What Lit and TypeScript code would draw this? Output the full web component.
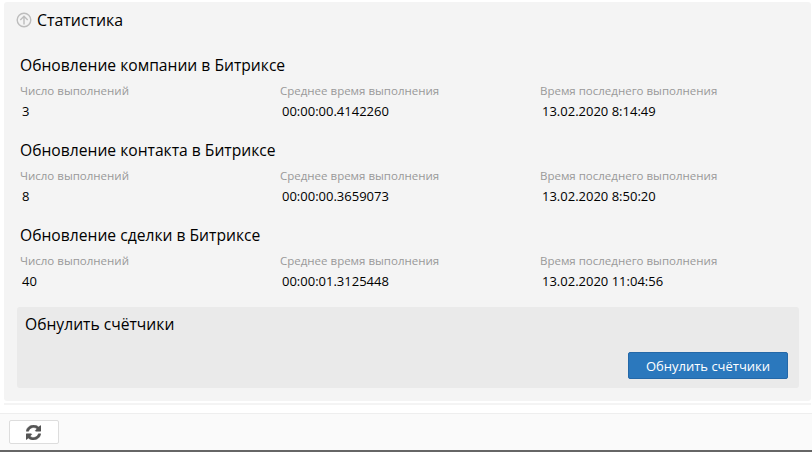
import { LitElement, html, css } from "lit";
import { customElement } from "lit/decorators.js";

const sections = [
  { title: "Обновление компании в Битриксе", n: "3", avg: "00:00:00.4142260", last: "13.02.2020 8:14:49" },
  { title: "Обновление контакта в Битриксе", n: "8", avg: "00:00:00.3659073", last: "13.02.2020 8:50:20" },
  { title: "Обновление сделки в Битриксе", n: "40", avg: "00:00:01.3125448", last: "13.02.2020 11:04:56" },
];

@customElement("app-root")
export class AppRoot extends LitElement {
  static styles = css`
    :host { display: block; width: 812px; height: 452px; background: #fff; font-family: "Open Sans", "Noto Sans", sans-serif; color: #000; overflow: hidden; }
    .page { display: flex; flex-direction: column; height: 452px; }
    .main { flex: none; height: 413px; padding: 2px 1px 0 4px; box-sizing: border-box; }
    .panel { background: #f4f4f4; height: 399px; border-radius: 3px; padding: 0 12px 0 13px; box-sizing: border-box; }
    .strip { height: 2px; margin-top: 2px; background: #f4f4f4; }
    .head { display: flex; align-items: center; gap: 5px; height: 36px; margin-left: -1px; }
    .head svg { display: block; }
    .head span { font-size: 15.9px; }
    .sec { padding: 0 0 0 3px; height: 85px; }
    .sec h3 { margin: 0; font-size: 15.65px; font-weight: 400; line-height: 20px; padding-top: 17px; padding-bottom: 8px; }
    .cols { display: grid; grid-template-columns: 260px 260px 1fr; }
    .lab { font-size: 11.5px; color: #999; line-height: 16px; }
    .val { font-size: 13px; padding: 4px 0 0 2px; line-height: 17px; }
    .reset { background: #eaeaea; border-radius: 3px; height: 81px; margin-top: 14px; padding: 0 11px 0 8px; box-sizing: border-box; display: flex; flex-direction: column; }
    .reset h4 { margin: 0; font-size: 15.65px; font-weight: 400; line-height: 20px; padding-top: 7px; }
    .btn { margin: 18px 0 0 auto; width: 160px; height: 27px; background: #2b78bd; border: 1px solid #2468a8; border-radius: 2px; color: #fff; font: 13px "Open Sans", "Noto Sans", sans-serif; padding: 0; box-sizing: border-box; }
    .foot { flex: none; height: 37px; background: #fafafa; border-top: 1px solid #eee; box-sizing: border-box; padding: 6px 0 0 9px; }
    .ref { width: 50px; height: 24px; background: #fff; border: 1px solid #ddd; border-radius: 2px; display: flex; align-items: center; justify-content: center; box-sizing: border-box; padding: 0 1px 0 0; }
    .bar { flex: none; height: 2px; background: #666; }
  `;
  render() {
    return html`<div class="page">
      <div class="main"><div class="panel">
        <div class="head">
          <svg width="16" height="16" viewBox="0 0 16 16" fill="none" stroke="#bdbdbd" stroke-width="1.4"><circle cx="8" cy="8" r="6.8"/><path d="M8 12.500V4.200M4.300 7.900 8 4.200l3.700 3.700"/></svg>
          <span>Статистика</span>
        </div>
        ${sections.map(s => html`<div class="sec">
          <h3>${s.title}</h3>
          <div class="cols">
            <div><div class="lab">Число выполнений</div><div class="val">${s.n}</div></div>
            <div><div class="lab">Среднее время выполнения</div><div class="val">${s.avg}</div></div>
            <div><div class="lab">Время последнего выполнения</div><div class="val">${s.last}</div></div>
          </div>
        </div>`)}
        <div class="reset">
          <h4>Обнулить счётчики</h4>
          <button class="btn">Обнулить счётчики</button>
        </div>
      </div><div class="strip"></div></div>
      <div class="foot"><button class="ref">
        <svg width="15" height="15" viewBox="0 0 1536 1536" fill="#555" stroke="#555" stroke-width="50"><path d="M1511 928q0 5-1 7-64 268-268 434.500T764 1536q-146 0-282.500-55T238 1324l-129 129q-19 19-45 19t-45-19-19-45V960q0-26 19-45t45-19h448q26 0 45 19t19 45-19 45L420 1142q71 66 161 102t187 36q134 0 250-65t186-179q11-17 53-117 8-23 30-23h192q13 0 22.500 9.500t9.500 22.500zm25-800v448q0 26-19 45t-45 19h-448q-26 0-45-19t-19-45 19-45l138-138Q969 256 768 256q-134 0-250 65T332 500q-11 17-53 117-8 23-30 23H50q-13 0-22.500-9.500T18 608v-7q65-268 270-434.500T768 0q146 0 284 55.500T1297 212l130-129q19-19 45-19t45 19 19 45z"/></svg>
      </button></div>
      <div class="bar"></div>
    </div>`;
  }
}
